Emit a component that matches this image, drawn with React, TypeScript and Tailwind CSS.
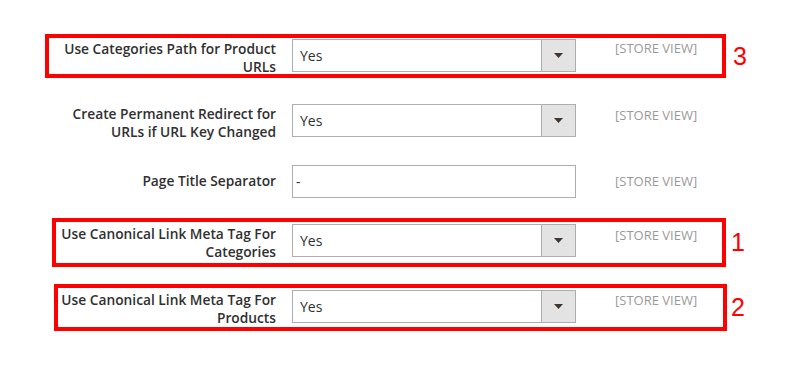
import React from "react";

type RowProps = {
  label: React.ReactNode;
  mt: number;
  kind: "select" | "input";
  value: string;
  twoLine?: boolean;
  scopeMt: number;
  box?: { left: number; top: number; width: number; height: number };
  num?: { text: string; left: number; top: number };
};

function Control({ kind, value }: { kind: "select" | "input"; value: string }) {
  if (kind === "input") {
    return (
      <div className="flex h-[33px] w-[284px] shrink-0 items-center border border-[#adadad] bg-white pl-[3px] text-[14px] text-[#303030]">
        {value}
      </div>
    );
  }
  return (
    <div className="flex h-[33px] w-[284px] shrink-0 border border-[#adadad] bg-white">
      <div className="flex flex-1 items-center pl-[7px] text-[14px] text-[#303030]">{value}</div>
      <div className="flex w-[34px] items-center justify-center border-l border-[#adadad] bg-[#e3e3e3]">
        <svg width="9" height="5" viewBox="0 0 9 5">
          <path d="M0 0 L9 0 L4.5 5 Z" fill="#41362f" />
        </svg>
      </div>
    </div>
  );
}

function Row({ label, mt, kind, value, twoLine = true, scopeMt, box, num }: RowProps) {
  return (
    <div className="relative flex items-start pl-[51px]" style={{ marginTop: mt }}>
      <div
        className={
          "w-[225px] shrink-0 text-right text-[13.75px] font-semibold leading-[18px] text-[#303030] " +
          (twoLine ? "pt-[1px]" : "pt-[7px]")
        }
      >
        {label}
      </div>
      <div className="ml-[16px]">
        <Control kind={kind} value={value} />
      </div>
      <div className="ml-[39px] text-[13px] leading-[16px] text-[#9a9a9a]" style={{ marginTop: scopeMt }}>
        [STORE VIEW]
      </div>
      {box && (
        <div
          className="pointer-events-none absolute border-[4px] border-[#ff0000]"
          style={{ left: box.left, top: box.top, width: box.width, height: box.height }}
        />
      )}
      {num && (
        <div
          className="absolute text-[25px] leading-none text-[#ff0000]"
          style={{ left: num.left, top: num.top, fontFamily: '"Liberation Sans", Arial, sans-serif' }}
        >
          {num.text}
        </div>
      )}
    </div>
  );
}

export default function App() {
  return (
    <div
      className="h-[367px] w-[807px] overflow-hidden bg-white pt-[39px]"
      style={{ fontFamily: '"Open Sans", "Noto Sans", sans-serif' }}
    >
      <Row
        mt={0}
        scopeMt={1}
        label={
          <>
            Use Categories Path for Product
            <br />
            URLs
          </>
        }
        kind="select"
        value="Yes"
        box={{ left: 45, top: -5, width: 681, height: 44 }}
        num={{ text: "3", left: 733, top: 5 }}
      />
      <Row
        mt={28}
        scopeMt={3}
        label={
          <>
            Create Permanent Redirect for
            <br />
            URLs if URL Key Changed
          </>
        }
        kind="select"
        value="Yes"
      />
      <Row mt={24} scopeMt={8} label="Page Title Separator" kind="input" value="-" twoLine={false} />
      <Row
        mt={26}
        scopeMt={3}
        label={
          <>
            Use Canonical Link Meta Tag For
            <br />
            Categories
          </>
        }
        kind="select"
        value="Yes"
        box={{ left: 52, top: -6, width: 674, height: 49 }}
        num={{ text: "1", left: 731, top: 6 }}
      />
      <Row
        mt={29}
        scopeMt={2}
        label={
          <>
            Use Canonical Link Meta Tag For
            <br />
            Products
          </>
        }
        kind="select"
        value="Yes"
        box={{ left: 54, top: -6, width: 673, height: 47 }}
        num={{ text: "2", left: 731, top: 5 }}
      />
    </div>
  );
}
